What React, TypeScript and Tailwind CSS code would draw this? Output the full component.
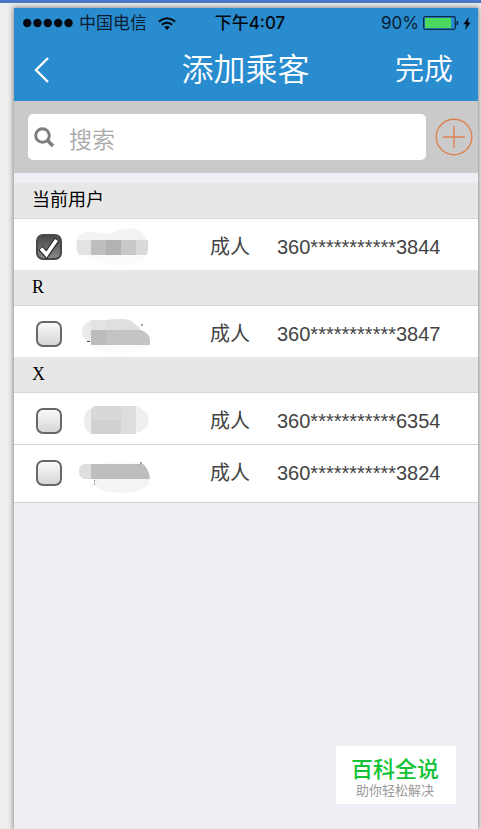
import React, { useState } from 'react'
import clsx from 'clsx'

type Passenger = {
    id: string
    kind: string
    card: string
    mask: React.ReactNode
}

type Group = {
    title: string
    latin?: boolean
    passengers: Passenger[]
}

const groups: Group[] = [
    {
        title: '当前用户',
        passengers: [
            {
                id: 'p1',
                kind: '成人',
                card: '360***********3844',
                mask: (
                    <>
                        <path d="M13 20h59v5q-12 7-30 6t-28-8z" fill="#fbfbfb" />
                        <path d="M3 3q9-8 22-4 12 2 20-3Q52-7 60-5q11 2 12 12H3z" fill="#f3f3f3" />
                        <path d="M3 6h14v15H5q-4-7-2-15z" fill="#e3e3e3" />
                        <path d="M17 6h15v15H17z" fill="#bebebe" />
                        <path d="M32 6h15v15H32z" fill="#b2b2b2" />
                        <path d="M47 6h15v15H47z" fill="#c8c8c8" />
                        <path d="M62 6h12q1 8-1 15H62z" fill="#d9d9d9" />
                    </>
                ),
            },
        ],
    },
    {
        title: 'R',
        latin: true,
        passengers: [
            {
                id: 'p2',
                kind: '成人',
                card: '360***********3847',
                mask: (
                    <>
                        <path d="M17 24h57q-12 8-32 8t-25-6z" fill="#fbfbfb" />
                        <path d="M17-1v22Q8 19 8 11t9-12z" fill="#eaeaea" />
                        <path d="M17-1h15v10H17z" fill="#e3e3e3" />
                        <path d="M32-1q15-2 24 0l10 8v3H32z" fill="#dfdfdf" />
                        <path d="M17 9h15v15H17z" fill="#bcbcbc" />
                        <path d="M32 9h15v15H32z" fill="#c3c3c3" />
                        <path d="M47 9h20q9 4 9 10v5H47z" fill="#c4c4c4" />
                        <path d="M67 4h2M13 20.500h3" stroke="#444" />
                    </>
                ),
            },
        ],
    },
    {
        title: 'X',
        latin: true,
        passengers: [
            {
                id: 'p3',
                kind: '成人',
                card: '360***********6354',
                mask: (
                    <>
                        <path d="M17 0v26q-7-3-7-13t7-13z" fill="#ececec" />
                        <path d="M17 1q2-3 5-3h25v14H17z" fill="#d8d8d8" />
                        <path d="M17 12h30v14H17z" fill="#d1d1d1" />
                        <path d="M47-2h15v28H47z" fill="#dddddd" />
                        <path d="M62-2q12 4 13 14-2 12-13 13z" fill="#efefef" />
                    </>
                ),
            },
            {
                id: 'p4',
                kind: '成人',
                card: '360***********3824',
                mask: (
                    <>
                        <path d="M20 19h55v5q-10 9-28 9T21 25z" fill="#f4f4f4" />
                        <path d="M24 4q22-6 42 0z" fill="#fafafa" />
                        <path d="M17 4v15h-7q-5-2-5-8t6-7z" fill="#dedede" />
                        <path d="M17 4h52q6 5 7 15H17z" fill="#bdbdbd" />
                        <path d="M66 3h2M20 21h1M20 24h1" stroke="#444" />
                    </>
                ),
            },
        ],
    },
]

function StatusBar() {
    return (
        <div className="flex h-[30px] items-center justify-between pl-[9px] pr-[7px] font-['Inter','Noto_Sans_CJK_SC',sans-serif] text-[17px] leading-none text-[#0b1c33]">
            <div className="flex flex-1 items-center gap-[6px] whitespace-nowrap">
                <svg width="50" height="10" viewBox="0 0 50 10" fill="#05080f" className="shrink-0" aria-hidden="true">
                    <circle cx="4.200" cy="5" r="4.200" />
                    <circle cx="14.500" cy="5" r="4.200" />
                    <circle cx="24.800" cy="5" r="4.200" />
                    <circle cx="35.200" cy="5" r="4.200" />
                    <circle cx="45.500" cy="5" r="4.200" />
                </svg>
                <span>中国电信</span>
                <svg width="18" height="13" viewBox="0 0 18 13" fill="none" stroke="#05080f" strokeWidth="2" className="ml-[5px] shrink-0" aria-hidden="true">
                    <path d="M.8 4.600Q9-2 17.200 4.600" />
                    <path d="M3.800 7.800Q9 3.600 14.200 7.800" />
                    <path d="M9 13 6.200 10Q9 7.800 11.800 10z" fill="#05080f" stroke="none" />
                </svg>
            </div>
            <div className="pl-[6px] font-medium text-[#05080f]">下午4:07</div>
            <div className="flex flex-1 items-center justify-end gap-[4px]">
                <span>90%</span>
                <svg width="36" height="14" viewBox="0 0 36 14" aria-hidden="true">
                    <rect x="0.7" y="0.7" width="31.600" height="12.600" rx="1.500" fill="none" stroke="#0c2a4a" strokeWidth="1.300" />
                    <rect x="2" y="2" width="26" height="10" fill="#4cd95f" />
                    <path d="M33.500 4.500q2 .5 2 2.500t-2 2.500z" fill="#0c2a4a" />
                </svg>
                <svg width="8" height="13" viewBox="0 0 8 13" fill="#05080f" aria-hidden="true">
                    <path d="M5.800 0 .3 7.300h2.900L2 13l5.700-7.500H4.800z" />
                </svg>
            </div>
        </div>
    )
}

function Header() {
    return (
        <header className="h-[93px] bg-[#298ccf]">
            <StatusBar />
            <div className="grid grid-cols-[1fr_auto_1fr] items-center pl-[20px] pr-[25px] pt-[2px] text-white">
                <button type="button" aria-label="返回" className="w-fit">
                    <svg width="16" height="26" viewBox="0 0 16 26" fill="none" stroke="currentColor" strokeWidth="2.4">
                        <path d="M14 1 2 13l12 12" />
                    </svg>
                </button>
                <h1 className="pl-[4px] text-[32px] leading-[60px] font-[350]">添加乘客</h1>
                <button type="button" className="justify-self-end text-[29px] leading-[60px] font-[350]">
                    完成
                </button>
            </div>
        </header>
    )
}

function SearchBar() {
    return (
        <div className="flex h-[72px] items-center gap-[9px] bg-[#cacacb] pl-[14px] pr-[5px]">
            <label className="flex h-[46px] min-w-0 flex-1 items-center gap-[14px] rounded-[5px] bg-white px-[6px]">
                <svg width="21" height="21" viewBox="0 0 21 21" fill="none" stroke="#7e7e7e" className="shrink-0" aria-hidden="true">
                    <circle cx="8.500" cy="8.500" r="6.800" strokeWidth="3" />
                    <path d="m13 13 6 6" strokeWidth="3.600" />
                </svg>
                <input
                    type="search"
                    aria-label="搜索"
                    placeholder="搜索"
                    className="h-full min-w-0 flex-1 pt-[6px] text-[23px] font-[350] outline-none placeholder:text-[#a9a9a9]"
                />
            </label>
            <button type="button" aria-label="添加" className="shrink-0">
                <svg width="38" height="38" viewBox="0 0 38 38" fill="none" stroke="#dc8350" strokeWidth="1.400">
                    <circle cx="19" cy="19" r="17.800" />
                    <path d="M8 19h22M19 8v22" />
                </svg>
            </button>
        </div>
    )
}

type RowProps = {
    passenger: Passenger
    last: boolean
    checked: boolean
    onToggle: () => void
}

function PassengerRow({ passenger, last, checked, onToggle }: RowProps) {
    return (
        <li className={clsx('bg-white pl-[22px] pt-[15px]', last ? 'border-b border-[#d2d2d4] pb-[16px]' : 'pb-[10px]')}>
            <label className="flex h-[26px] items-center text-[20px] text-[#444]">
                <span className="relative block size-[26px] shrink-0">
                    <input
                        type="checkbox"
                        checked={checked}
                        onChange={onToggle}
                        aria-label={passenger.card}
                        className="peer block size-[26px] appearance-none rounded-[7px] border-2 border-[#686868] bg-linear-to-b from-[#fafafa] to-[#d6d6d6] checked:border-[#484848] checked:from-[#484848] checked:to-[#888]"
                    />
                    <svg
                        viewBox="0 0 26 26"
                        className="pointer-events-none absolute inset-0 hidden size-[26px] peer-checked:block"
                        fill="none"
                        aria-hidden="true"
                    >
                        <path d="m4.500 14 6 6.500L21 5.500" stroke="#2c2c2c" strokeWidth="6" />
                        <path d="m5 14.500 5.500 6L20.500 6" stroke="#fff" strokeWidth="3.600" />
                    </svg>
                </span>
                <svg width="80" height="26" viewBox="0 0 80 26" className="ml-[12px] shrink-0 overflow-visible" aria-hidden="true">
                    {passenger.mask}
                </svg>
                <span className="ml-[56px] shrink-0">{passenger.kind}</span>
                <span className="ml-[27px]">{passenger.card}</span>
            </label>
        </li>
    )
}

export default function App() {
    const [selected, setSelected] = useState<string[]>(['p1'])

    const toggle = (id: string) => {
        setSelected((prev) => (prev.includes(id) ? prev.filter((item) => item !== id) : [...prev, id]))
    }

    return (
        <div className="flex min-h-screen flex-col border-t-[3px] border-[#4b75c6] bg-[#eeeeee] pl-[14px] pr-[3px] pt-[5px] font-['Liberation_Sans','Noto_Sans_CJK_SC',sans-serif]">
            <main className="relative flex flex-1 flex-col bg-[#eeeef4] shadow-[0_0_5px_1px_#8c8c8c]">
                <Header />
                <SearchBar />

                <div className="pt-[10px]">
                    {groups.map((group, i) => (
                        <section key={group.title}>
                            <h2
                                className={clsx(
                                    'h-[36px] border-b border-[#d6d6d6] bg-[#e7e7e7] pl-[18px] text-[18px] leading-[34px] text-black',
                                    group.latin && "font-['Liberation_Serif',serif]"
                                )}
                            >
                                {group.title}
                            </h2>
                            <ul className="divide-y divide-[#d2d2d4]">
                                {group.passengers.map((p, j) => (
                                    <PassengerRow
                                        key={p.id}
                                        passenger={p}
                                        last={i === groups.length - 1 && j === group.passengers.length - 1}
                                        checked={selected.includes(p.id)}
                                        onToggle={() => toggle(p.id)}
                                    />
                                ))}
                            </ul>
                        </section>
                    ))}
                </div>

                {/* Brand mark */}
                <div className="absolute bottom-[25px] right-[22px] flex h-[58px] w-[120px] flex-col items-center bg-white pt-[10px] pr-[2px]">
                    <p className="text-[22px] leading-[28px] font-medium text-[#12c337]">百科全说</p>
                    <p className="text-[13px] leading-[14px] text-[#999]">助你轻松解决</p>
                </div>
            </main>
        </div>
    )
}
